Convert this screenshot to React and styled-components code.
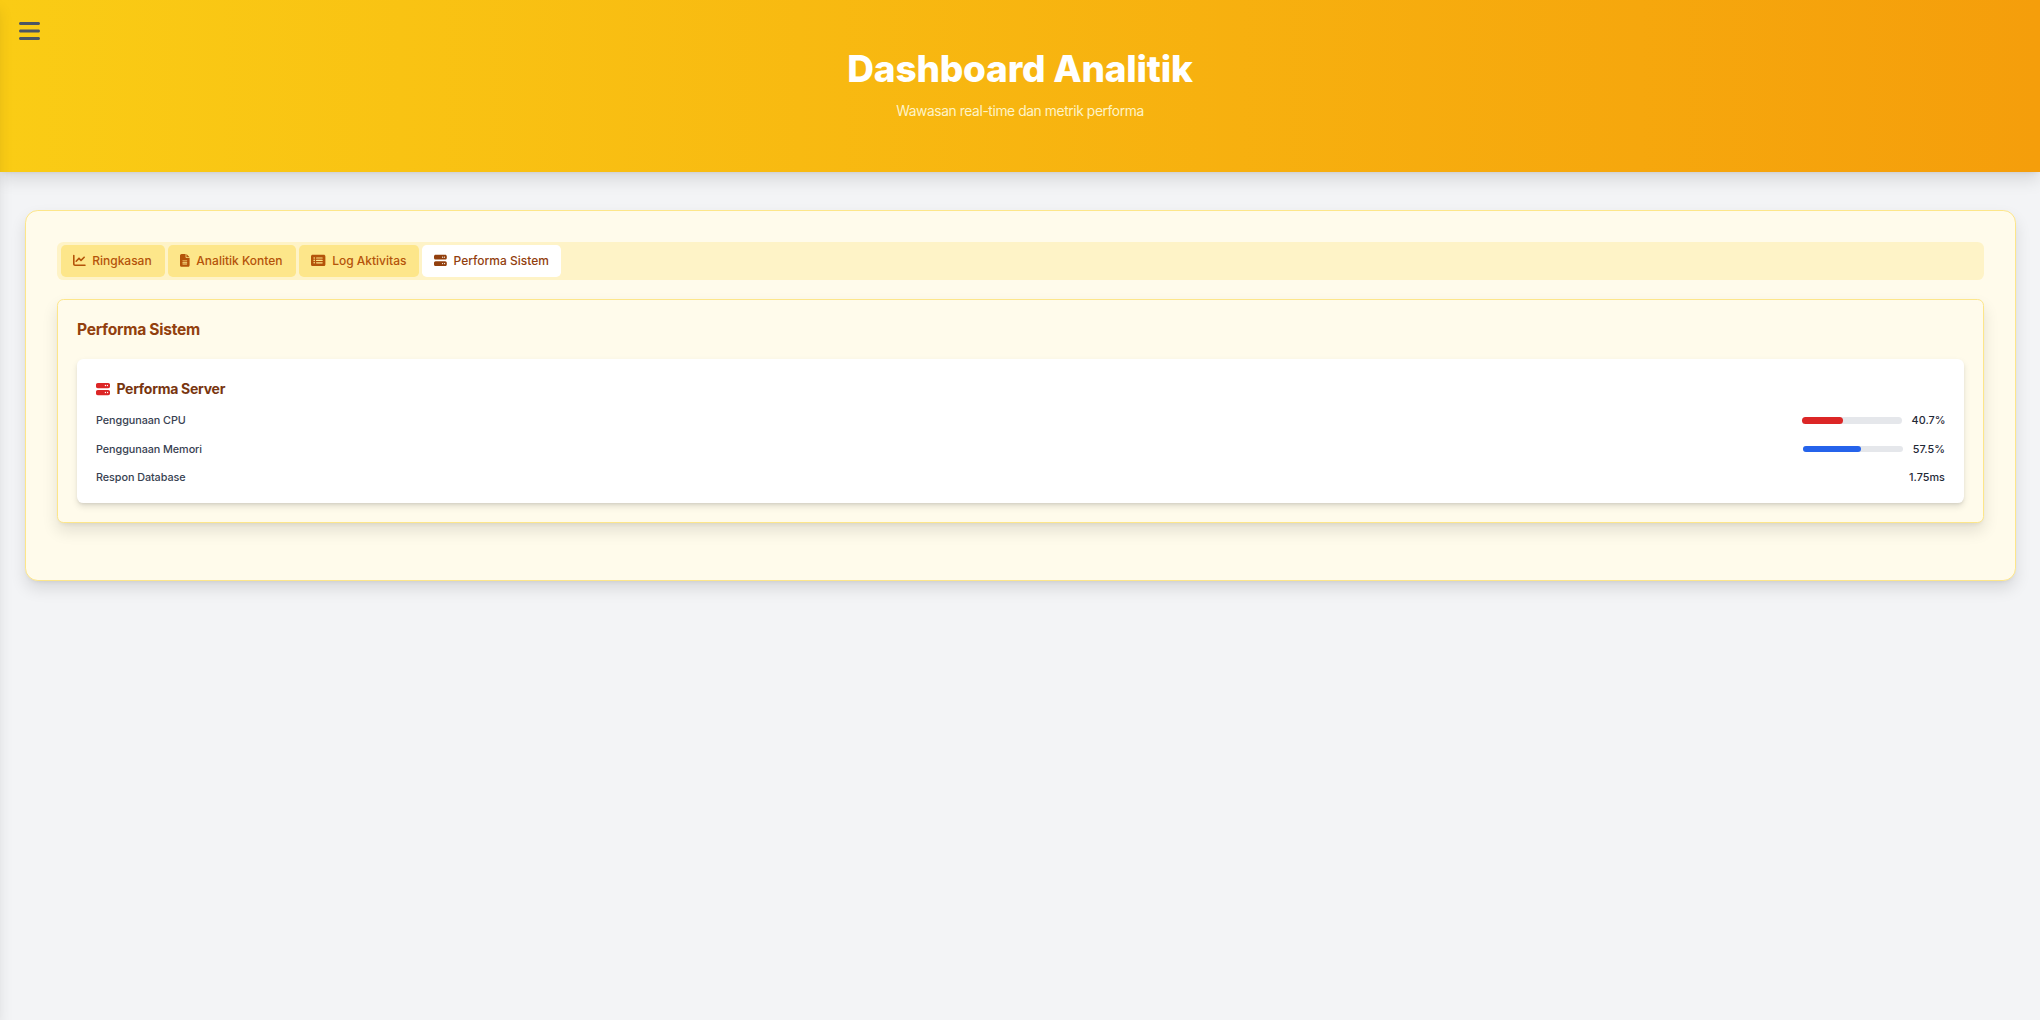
import React from "react";
import styled, { createGlobalStyle } from "styled-components";
import { FaBars, FaChartLine, FaFileLines, FaRectangleList, FaServer } from "react-icons/fa6";

const GlobalStyle = createGlobalStyle`
  *, *::before, *::after { box-sizing: border-box; }
  body {
    margin: 0;
    background: #f3f4f6;
    font-family: Inter, "Liberation Sans", sans-serif;
    color: #1f2937;
  }
  h1, h2, h3, p { margin: 0; }
  button { font: inherit; border: 0; cursor: pointer; }
  svg { flex: none; }
`;

const raised = "0 8px 16px rgba(0, 0, 0, 0.11), 0 3px 5px -3px rgba(0, 0, 0, 0.1)";

const Page = styled.div`
  min-height: 100vh;
  overflow: hidden;
`;

const Sidebar = styled.aside`
  position: fixed;
  top: 0;
  left: -205px;
  width: 205px;
  height: 100vh;
  background: #fff;
  box-shadow: 0 8px 14px -1.5px rgba(0, 0, 0, 0.1), 0 3.2px 4.8px -3.2px rgba(0, 0, 0, 0.1);
  z-index: 20;
`;

const MenuButton = styled.button`
  position: fixed;
  top: 19px;
  left: 19px;
  display: flex;
  padding: 0;
  background: none;
  color: #4b5563;
  z-index: 10;
  svg { width: 21px; }
`;

const Header = styled.header`
  height: 172px;
  padding-top: 45px;
  text-align: center;
  background: linear-gradient(to right, #facc15, #f59e0b);
  box-shadow: ${raised};
`;

const Title = styled.h1`
  font-size: 37px;
  line-height: 48px;
  font-weight: 800;
  letter-spacing: -0.22px;
  color: #fff;
`;

const Subtitle = styled.p`
  margin-top: 7px;
  font-size: 13.8px;
  line-height: 22px;
  font-weight: 400;
  letter-spacing: -0.4px;
  color: #fef3c7;
`;

const Card = styled.main`
  height: 371px;
  margin: 38px 24px 0 25px;
  padding: 31px;
  background: #fffbeb;
  border: 1px solid #fde68a;
  border-radius: 12.8px;
  box-shadow: ${raised};
`;

const Tabs = styled.nav`
  display: flex;
  gap: 3.2px;
  height: 38px;
  padding: 3px 3.6px;
  background: #fef3c7;
  border-radius: 6.4px;
`;

const Tab = styled.button`
  display: flex;
  align-items: center;
  gap: 6.4px;
  width: ${(p) => p.$width}px;
  padding: 0 0 1.5px 12.4px;
  font-size: 12px;
  font-weight: 500;
  white-space: nowrap;
  border-radius: 4.8px;
  color: ${(p) => (p.$active ? "#92400e" : "#b45309")};
  background: ${(p) => (p.$active ? "#fff" : "#fde68a")};
  svg { width: ${(p) => p.$iconWidth}px; }
`;

const Panel = styled.section`
  height: 224px;
  margin-top: 19px;
  padding: 19px;
  background: #fffbeb;
  border: 1px solid #fde68a;
  border-radius: 6.4px;
  box-shadow: ${raised};
`;

const PanelTitle = styled.h2`
  font-size: 15.6px;
  line-height: 22px;
  font-weight: 700;
  letter-spacing: -0.27px;
  color: #92400e;
`;

const ServerCard = styled.div`
  height: 144px;
  margin-top: 18px;
  padding: 19px;
  background: #fff;
  border-radius: 6.4px;
  box-shadow: 0 3.2px 6.4px rgba(0, 0, 0, 0.1), 0 1.6px 3.2px -1.6px rgba(0, 0, 0, 0.1);
`;

const CardTitle = styled.h3`
  display: flex;
  align-items: center;
  gap: 6.4px;
  font-size: 14px;
  line-height: 22px;
  font-weight: 700;
  letter-spacing: -0.27px;
  color: #78350f;
  svg { color: #dc2626; }
`;

const Metrics = styled.div`
  display: grid;
  grid-template-rows: 29px 29px 28px;
  align-items: center;
  margin-top: 6px;
`;

const Metric = styled.div`
  display: flex;
  align-items: center;
  justify-content: space-between;
  font-size: 10.8px;
  line-height: 16px;
  font-weight: 500;
  letter-spacing: -0.06px;
  color: #374151;
`;

const Reading = styled.div`
  display: flex;
  align-items: center;
  gap: 9.6px;
  letter-spacing: 0.05px;
  color: #1f2937;
`;

const Value = styled.span`
  width: ${(p) => p.$width}px;
  text-align: right;
`;

const Track = styled.div`
  width: 100px;
  height: ${(p) => p.$height}px;
  margin-bottom: ${(p) => (p.$height === 6 ? 2 : 0)}px;
  background: #e5e7eb;
  border-radius: 99px;
`;

const Fill = styled.div`
  height: 100%;
  border-radius: 99px;
  background: ${(p) => p.$color};
`;

const tabs = [
  { label: "Ringkasan", Icon: FaChartLine, iconWidth: 12.8, width: 104.2 },
  { label: "Analitik Konten", Icon: FaFileLines, iconWidth: 9.6, width: 127.8 },
  { label: "Log Aktivitas", Icon: FaRectangleList, iconWidth: 14.4, width: 119.8 },
  { label: "Performa Sistem", Icon: FaServer, iconWidth: 12.8, width: 139, active: true },
];

const metrics = [
  { label: "Penggunaan CPU", value: "40.7%", percent: 40.7, color: "#dc2626", height: 7, valueWidth: 33.4 },
  { label: "Penggunaan Memori", value: "57.5%", percent: 57.5, color: "#2563eb", height: 6, valueWidth: 32.4 },
  { label: "Respon Database", value: "1.75ms", valueWidth: 40 },
];

export default function App() {
  return (
    <Page>
      <GlobalStyle />
      <Sidebar />
      <MenuButton aria-label="Menu"><FaBars size={24} /></MenuButton>
      <Header>
        <Title>Dashboard Analitik</Title>
        <Subtitle>Wawasan real-time dan metrik performa</Subtitle>
      </Header>
      <Card>
        <Tabs>
          {tabs.map(({ label, Icon, iconWidth, width, active }) => (
            <Tab key={label} $width={width} $iconWidth={iconWidth} $active={active}>
              <Icon size={12.8} />
              {label}
            </Tab>
          ))}
        </Tabs>
        <Panel>
          <PanelTitle>Performa Sistem</PanelTitle>
          <ServerCard>
            <CardTitle><FaServer size={14} />Performa Server</CardTitle>
            <Metrics>
              {metrics.map((m) => (
                <Metric key={m.label}>
                  <span>{m.label}</span>
                  <Reading>
                    {m.percent && (
                      <Track $height={m.height}>
                        <Fill $color={m.color} style={{ width: `${m.percent}%` }} />
                      </Track>
                    )}
                    <Value $width={m.valueWidth}>{m.value}</Value>
                  </Reading>
                </Metric>
              ))}
            </Metrics>
          </ServerCard>
        </Panel>
      </Card>
    </Page>
  );
}
